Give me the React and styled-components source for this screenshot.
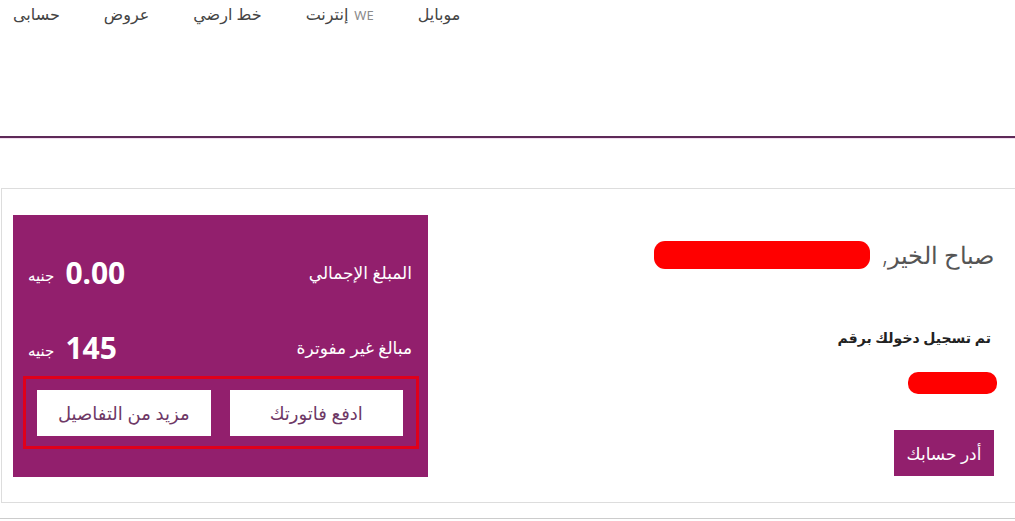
import React from "react";
import styled, { createGlobalStyle } from "styled-components";

const GlobalStyle = createGlobalStyle`
  html, body {
    margin: 0;
    padding: 0;
    background: #ffffff;
    overflow: hidden;
  }
  body {
    font-family: "Noto Sans", "DejaVu Sans", sans-serif;
    color: #333333;
  }
`;

const navItems = [
  { text: "موبايل" },
  { text: "إنترنت", brand: "WE" },
  { text: "خط ارضي" },
  { text: "عروض" },
  { text: "حسابى" },
];

const billRows = [
  { label: "المبلغ الإجمالي", amount: "0.00" },
  { label: "مبالغ غير مفوترة", amount: "145" },
];

const App = () => {
  return (
    <Page>
      <GlobalStyle />
      <Header>
        <Nav>
          {navItems.map((item) => (
            <NavLink key={item.text}>
              {item.brand && <Brand>{item.brand}</Brand>}
              {item.text}
            </NavLink>
          ))}
        </Nav>
      </Header>

      <Card>
        <Greeting>
          <Hello>
            صباح الخير,
            <Redacted $w={216} $h={28} />
          </Hello>
          <LoggedIn>تم تسجيل دخولك برقم</LoggedIn>
          <NumberRedacted $w={89} $h={22} />
          <ManageButton>أدر حسابك</ManageButton>
        </Greeting>

        <BillPanel>
          {billRows.map((row) => (
            <BillRow key={row.label}>
              <BillLabel>{row.label}</BillLabel>
              <Amount>
                <AmountValue>{row.amount}</AmountValue>
                <Currency>جنيه</Currency>
              </Amount>
            </BillRow>
          ))}
          <ActionBox>
            <WhiteButton>ادفع فاتورتك</WhiteButton>
            <WhiteButton>مزيد من التفاصيل</WhiteButton>
          </ActionBox>
        </BillPanel>
      </Card>

      <NextCard />
    </Page>
  );
};

export default App;

const Page = styled.div`
  width: 1015px;
  height: 521px;
  overflow: hidden;
`;

const Header = styled.header`
  height: 136px;
  border-bottom: 2px solid #5e2a58;
  box-shadow: 0 1px 0 #f3dcef;
  display: flex;
  direction: ltr;
`;

const Nav = styled.nav`
  direction: rtl;
  display: flex;
  gap: 44px;
  padding-top: 2px;
  height: 24px;
  margin-left: 13px;
`;

const NavLink = styled.a`
  font-size: 16px;
  color: #444444;
  line-height: 24px;
  white-space: nowrap;
  cursor: pointer;
`;

const Brand = styled.span`
  font-size: 13px;
  color: #8a8a8a;
  margin-left: 6px;
`;

const Card = styled.section`
  direction: rtl;
  margin: 50px 0 0 1px;
  border: 1px solid #dddddd;
  border-right: none;
  height: 315px;
  display: flex;
  justify-content: space-between;
  padding: 26px 0 0 11px;
  box-sizing: border-box;
`;

const Greeting = styled.div`
  display: flex;
  flex-direction: column;
  align-items: flex-start;
  padding: 24px 21px 0 0;
`;

const Hello = styled.h2`
  margin: 0;
  font-size: 24px;
  font-weight: 300;
  color: #555555;
  display: flex;
  align-items: center;
  gap: 12px;
  line-height: 32px;
`;

const Redacted = styled.span`
  display: inline-block;
  width: ${(p) => p.$w}px;
  height: ${(p) => p.$h}px;
  border-radius: 11px;
  background: #ff0000;
`;

const NumberRedacted = styled(Redacted)`
  margin: 24px -3px 0 0;
  border-radius: 10px;
`;

const LoggedIn = styled.p`
  margin: 57px 3px 0 0;
  font-size: 14px;
  font-weight: 700;
  color: #222222;
  line-height: 20px;
`;

const ManageButton = styled.button`
  margin-top: 36px;
  width: 100px;
  height: 46px;
  border: none;
  background: #921f6d;
  color: #ffffff;
  font-family: inherit;
  font-size: 17px;
  cursor: pointer;
`;

const BillPanel = styled.div`
  width: 415px;
  height: 262px;
  background: #921f6d;
  box-sizing: border-box;
  padding: 37px 9px 0 10px;
  display: flex;
  flex-direction: column;
`;

const BillRow = styled.div`
  display: flex;
  justify-content: space-between;
  align-items: center;
  height: 40px;
  padding: 0 7px 0 5px;
  margin-bottom: 35px;
  color: #ffffff;

  &:nth-of-type(2) {
    margin-bottom: 9px;
  }
`;

const BillLabel = styled.span`
  font-size: 17px;
`;

const Amount = styled.span`
  display: flex;
  align-items: center;
  gap: 11px;
`;

const AmountValue = styled.span`
  font-size: 30px;
  font-weight: 700;
  direction: ltr;
`;

const Currency = styled.span`
  font-size: 15px;
  padding-top: 5px;
`;

const ActionBox = styled.div`
  border: 3px solid #e0001b;
  height: 73px;
  box-sizing: border-box;
  padding: 11px 13px 0 11px;
  display: flex;
  gap: 19px;
`;

const WhiteButton = styled.button`
  flex: 1;
  height: 46px;
  border: none;
  background: #ffffff;
  color: #6e3866;
  font-family: inherit;
  font-size: 18px;
  cursor: pointer;
`;

const NextCard = styled.div`
  margin: 15px 0 0 0;
  border-top: 1px solid #cccccc;
  height: 20px;
`;
